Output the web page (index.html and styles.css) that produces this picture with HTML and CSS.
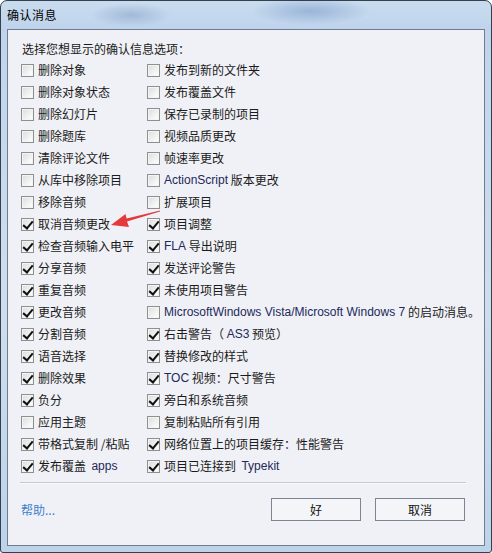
FILE: index.html
```
<!DOCTYPE html>
<html lang="zh-CN">
<head>
	<meta charset="UTF-8">
	<title>确认消息</title>
	<link rel="stylesheet" href="styles.css">
</head>
<body>
	<div class="window">
		<div class="titlebar">确认消息</div>
		<div class="panel">
			<p class="prompt">选择您想显示的确认信息选项：</p>
			<div class="opts">
				<label><span class="cb"></span>删除对象</label>
				<label><span class="cb"></span>发布到新的文件夹</label>
				<label><span class="cb"></span>删除对象状态</label>
				<label><span class="cb"></span>发布覆盖文件</label>
				<label><span class="cb"></span>删除幻灯片</label>
				<label><span class="cb"></span>保存已录制的项目</label>
				<label><span class="cb"></span>删除题库</label>
				<label><span class="cb"></span>视频品质更改</label>
				<label><span class="cb"></span>清除评论文件</label>
				<label><span class="cb"></span>帧速率更改</label>
				<label><span class="cb"></span>从库中移除项目</label>
				<label><span class="cb"></span><span class="en">ActionScript</span>&nbsp;版本更改</label>
				<label><span class="cb"></span>移除音频</label>
				<label><span class="cb"></span>扩展项目</label>
				<label><span class="cb on"></span>取消音频更改</label>
				<label><span class="cb on"></span>项目调整</label>
				<label><span class="cb on"></span>检查音频输入电平</label>
				<label><span class="cb on"></span><span class="en">FLA</span>&nbsp;导出说明</label>
				<label><span class="cb on"></span>分享音频</label>
				<label><span class="cb on"></span>发送评论警告</label>
				<label><span class="cb on"></span>重复音频</label>
				<label><span class="cb on"></span>未使用项目警告</label>
				<label><span class="cb on"></span>更改音频</label>
				<label><span class="cb"></span><span class="en">MicrosoftWindows Vista/Microsoft Windows 7</span>&nbsp;的启动消息。</label>
				<label><span class="cb on"></span>分割音频</label>
				<label><span class="cb on"></span>右击警告（&nbsp;<span class="en">AS3</span>&nbsp;预览）</label>
				<label><span class="cb on"></span>语音选择</label>
				<label><span class="cb on"></span>替换修改的样式</label>
				<label><span class="cb on"></span>删除效果</label>
				<label><span class="cb on"></span><span class="en">TOC</span>&nbsp;视频：尺寸警告</label>
				<label><span class="cb on"></span>负分</label>
				<label><span class="cb on"></span>旁白和系统音频</label>
				<label><span class="cb"></span>应用主题</label>
				<label><span class="cb"></span>复制粘贴所有引用</label>
				<label><span class="cb on"></span>带格式复制&nbsp;/粘贴</label>
				<label><span class="cb on"></span>网络位置上的项目缓存：性能警告</label>
				<label><span class="cb on"></span>发布覆盖&nbsp;&nbsp;<span class="en">apps</span></label>
				<label><span class="cb on"></span>项目已连接到&nbsp;&nbsp;<span class="en">Typekit</span></label>
			</div>
			<div class="sep"></div>
			<div class="footer">
				<a class="help" href="#">帮助...</a>
				<div class="btns">
					<button>好</button>
					<button>取消</button>
				</div>
			</div>
		</div>
		<svg class="arrow" width="492" height="553" viewBox="0 0 492 553">
			<polygon points="111,225 129,227 127,221.6 160,211.6 160,210.4 126.6,218.6 125.5,214 " fill="#e53a3c"/>
		</svg>
	</div>
</body>
</html>
```

FILE: styles.css
```
*{
	margin: 0;
	padding: 0;
	box-sizing: border-box;
}
body{
	font-family: "Noto Sans CJK SC", "Noto Sans", sans-serif;
	font-size: 12px;
	color: #1a1a1a;
	background: #fff;
}
.window{
	position: relative;
	width: 492px;
	height: 553px;
	border: 1px solid #34404d;
	border-radius: 7px 7px 3px 3px;
	padding: 0 6px 6px 6px;
	background:
		radial-gradient(ellipse 40px 12px at 130px 14px, rgba(120,150,190,0.45), rgba(120,150,190,0) 100%),
		radial-gradient(ellipse 60px 14px at 310px 10px, rgba(110,145,195,0.5), rgba(110,145,195,0) 100%),
		linear-gradient(to bottom, #c9dcef 0, #bfd4ec 28px, #cfdeee 300px, #bcd3ea 100%);
}
.titlebar{
	height: 28px;
	line-height: 28px;
	color: #000;
	letter-spacing: 0.5px;
}
.panel{
	height: 517px;
	border: 1px solid #6f7d8c;
	background: #f0f1f6;
	padding: 9px 0 0 0;
}
.prompt{
	height: 20px;
	line-height: 20px;
	padding-left: 14px;
}
.opts{
	display: grid;
	grid-template-columns: 126px 1fr;
	grid-auto-rows: 22px;
	padding-left: 13px;
}
.opts label{
	display: flex;
	align-items: center;
	white-space: nowrap;
	line-height: 22px;
}
.en{
	font-family: "Liberation Sans", "DejaVu Sans", sans-serif;
	font-size: 12px;
	color: #22285a;
}
.cb{
	position: relative;
	flex: none;
	width: 13px;
	height: 13px;
	margin-right: 4px;
	border: 1px solid #8e8f8f;
	background: linear-gradient(135deg, #dcdcdc 0, #f6f6f6 70%, #ffffff 100%);
	box-shadow: inset 0 0 0 1px #f4f4f4;
}
.cb.on::after{
	content: "";
	position: absolute;
	left: 3px;
	top: 0px;
	width: 4px;
	height: 8px;
	border-right: 2px solid #111;
	border-bottom: 2px solid #111;
	transform: rotate(40deg);
}
.sep{
	margin: 5px 18px 0 12px;
	height: 2px;
	border-top: 1px solid #c6c8cc;
	border-bottom: 1px solid #fbfbfd;
}
.footer{
	display: flex;
	justify-content: space-between;
	align-items: center;
	padding: 14px 19px 0 13px;
}
.help{
	color: #3a7fcf;
	text-decoration: none;
}
.btns{
	display: flex;
	gap: 14px;
}
button{
	width: 90px;
	height: 23px;
	border: 1px solid #7d8594;
	background: #f4f5f9;
	font-family: "Noto Sans CJK SC", sans-serif;
	font-size: 12px;
	color: #111;
	outline: none;
}
.arrow{
	position: absolute;
	left: -1px;
	top: -1px;
	pointer-events: none;
}
```
